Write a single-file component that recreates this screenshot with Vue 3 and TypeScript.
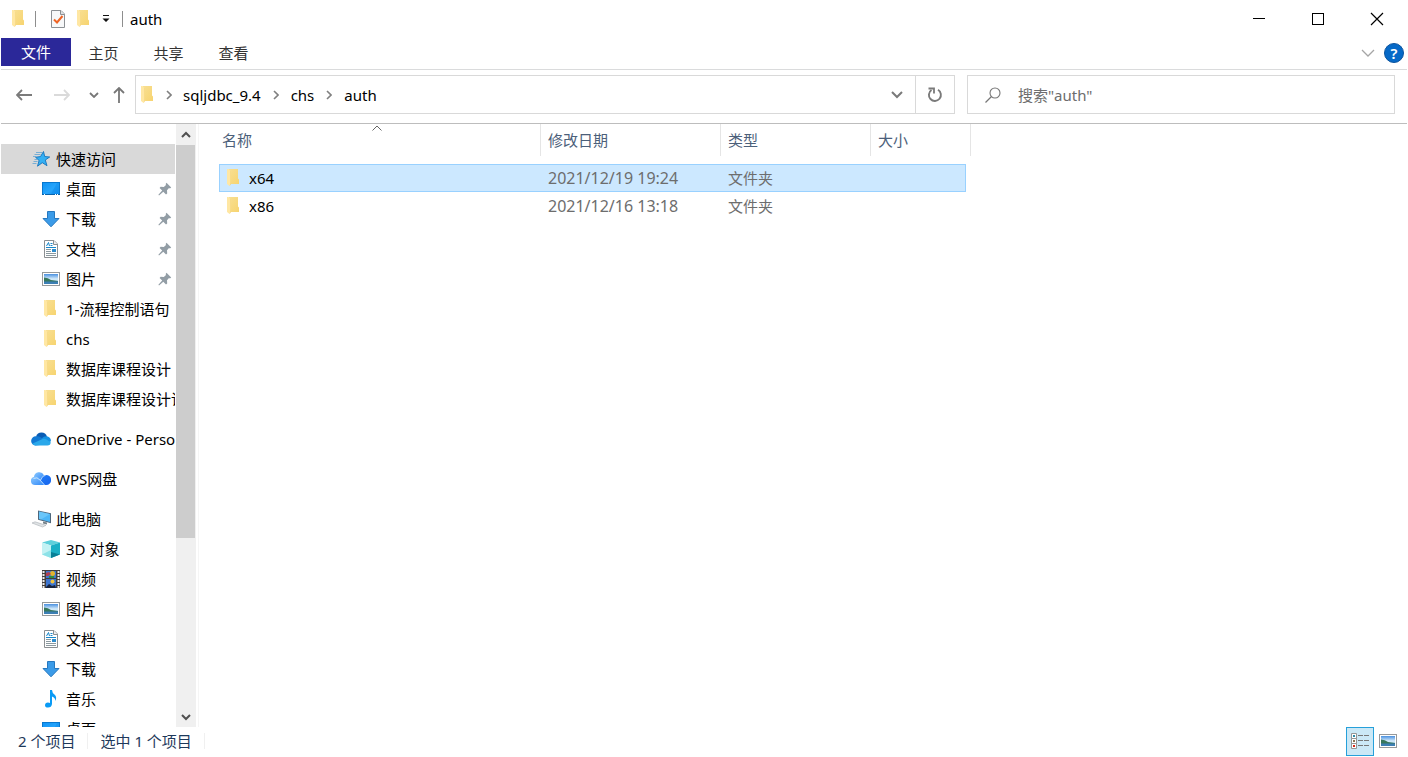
<script setup lang="ts">
import { ref } from 'vue'

interface NavItem {
  label: string
  icon: string
  root?: boolean
  pinned?: boolean
  gap?: boolean
}

interface Entry {
  name: string
  modified: string
  kind: string
}

const tabs: string[] = ['主页', '共享', '查看']
const crumbs: string[] = ['sqljdbc_9.4', 'chs', 'auth']

const navItems: NavItem[] = [
  { label: '快速访问', icon: 'star', root: true },
  { label: '桌面', icon: 'desktop', pinned: true },
  { label: '下载', icon: 'download', pinned: true },
  { label: '文档', icon: 'document', pinned: true },
  { label: '图片', icon: 'picture', pinned: true },
  { label: '1-流程控制语句', icon: 'folder' },
  { label: 'chs', icon: 'folder' },
  { label: '数据库课程设计', icon: 'folder' },
  { label: '数据库课程设计论文', icon: 'folder' },
  { label: 'OneDrive - Personal', icon: 'onedrive', root: true, gap: true },
  { label: 'WPS网盘', icon: 'wps', root: true, gap: true },
  { label: '此电脑', icon: 'computer', root: true, gap: true },
  { label: '3D 对象', icon: 'cube' },
  { label: '视频', icon: 'video' },
  { label: '图片', icon: 'picture' },
  { label: '文档', icon: 'document' },
  { label: '下载', icon: 'download' },
  { label: '音乐', icon: 'music' },
  { label: '桌面', icon: 'desktop' },
]

const entries: Entry[] = [
  { name: 'x64', modified: '2021/12/19 19:24', kind: '文件夹' },
  { name: 'x86', modified: '2021/12/16 13:18', kind: '文件夹' },
]

const currentNav = ref(0)
const selected = ref('x64')
const query = ref('')
</script>

<template>
  <div class="window">
    <svg class="sprite" aria-hidden="true">
      <defs>
        <linearGradient id="g-folder" x1="0" x2="1" y1="0" y2="1">
          <stop offset="0" stop-color="#f8df92" />
          <stop offset="1" stop-color="#f7d470" />
        </linearGradient>
        <linearGradient id="g-screen" x1="0" x2="1" y1="0" y2="1">
          <stop offset="0" stop-color="#0f93f5" />
          <stop offset="0.55" stop-color="#27a5fb" />
          <stop offset="1" stop-color="#0c8cf0" />
        </linearGradient>
        <linearGradient id="g-wps" x1="0" x2="1" y1="0" y2="1">
          <stop offset="0" stop-color="#1f7cf6" />
          <stop offset="1" stop-color="#1764ee" />
        </linearGradient>
        <linearGradient id="g-wps-light" x1="0" x2="1" y1="0" y2="1">
          <stop offset="0" stop-color="#8ccaff" />
          <stop offset="1" stop-color="#2f86f8" />
        </linearGradient>
        <linearGradient id="g-sky" x1="0" x2="0" y1="0" y2="1">
          <stop offset="0" stop-color="#4a90e0" />
          <stop offset="0.5" stop-color="#d5ecfb" />
          <stop offset="1" stop-color="#8fc0e6" />
        </linearGradient>
      </defs>
      <symbol id="i-folder" viewBox="0 0 20 20">
        <path d="M5 1h9v9.500l1 1V16H5z" fill="url(#g-folder)" />
        <path d="M6.500 3v13M6.500 16l-.8 1.500" fill="none" stroke="#efca68" stroke-width="0.800" />
        <path d="M3 1h1.500L6.500 3v12.500L5.500 18 3 16z" fill="#ffe7a3" />
      </symbol>
      <symbol id="i-star" viewBox="0 0 20 20">
        <path d="M12.500 2.500l1.200 5 5 .5-4.400 3 1.700 5.700-4.700-3-4.800 3.500 1.600-5.700L4.500 8.200l5-.6z" fill="#35b0f3" stroke="#1573bb" stroke-width="0.900" stroke-linejoin="round" />
        <path d="M5 3.500h6M3.500 5.500h6M2 7.500h3M3.500 10.500h3M2.500 12.500h4M1.500 14.500h4" stroke="#5fa5d4" stroke-width="0.800" fill="none" />
      </symbol>
      <symbol id="i-desktop" viewBox="0 0 20 20">
        <rect x="1.500" y="3.500" width="17" height="12" fill="url(#g-screen)" stroke="#0878cf" />
        <path d="M10 15L16 4h2v11z" fill="#0d8cec" opacity="0.500" />
        <path d="M1 15.500h18" stroke="#0864ad" />
        <path d="M3 15.500h1M14 15.500h1M16 15.500h1" stroke="#fff" />
      </symbol>
      <symbol id="i-download" viewBox="0 0 20 20">
        <path d="M6.500 2.500h7v7h4.500L10 17.800 2 9.500h4.500z" fill="#3b9be8" stroke="#2678bf" />
      </symbol>
      <symbol id="i-document" viewBox="0 0 20 20">
        <path d="M3.500 1.500h9.500l3.500 3.500v13.500h-13z" fill="#fff" stroke="#8b8f92" />
        <path d="M12.500 1.500V5.500H16.500" fill="#eee" stroke="#8b8f92" />
        <path d="M5.500 7L7.500 3.500 8.500 7M9.500 4.500h2M9.500 6.500h2M5 8.500h10" fill="none" stroke="#1787cb" />
        <path d="M5 10.500h5M5 12.500h5M5 14.500h10M5 16.500h10" stroke="#8b999f" />
        <path d="M11 10h4v3h-4z" fill="#2d8ccc" />
      </symbol>
      <symbol id="i-picture" viewBox="0 0 20 20">
        <rect x="1.500" y="3.500" width="17" height="13" fill="#fff" stroke="#96999b" />
        <rect x="3" y="5" width="14" height="10" fill="url(#g-sky)" />
        <path d="M3 8.500q4 .2 7 2.500l7 1v1H3z" fill="#37775c" />
        <path d="M3 12.500h14V15H3z" fill="#3c7fb4" />
      </symbol>
      <symbol id="i-onedrive" viewBox="0 0 20 20">
        <path d="M5 7.500A5.800 5.800 0 0 1 16 7.500L12 11z" fill="#0a5cb4" />
        <path d="M4.500 16.500A4.600 4.600 0 0 1 5 7.300q2.500-.5 5 1.200l4 2.500-5 5z" fill="#1279d4" />
        <path d="M10.500 9.500Q13 7 16 7.300q4 1 4 5l-2 1z" fill="#1490e2" />
        <path d="M1.200 14.800L11.500 10q1.800-.8 3.500.3l4.700 2.900a3.400 3.400 0 0 1-3.300 3.300h-12q-2 0-3.200-1.700z" fill="#2aa8ea" />
      </symbol>
      <symbol id="i-wps" viewBox="0 0 20 20">
        <path d="M3 8A5.300 5.300 0 0 1 13 6.200l-2.500 5z" fill="url(#g-wps-light)" />
        <path d="M10 10.500q1.500-4.500 5-4.500a4.900 4.900 0 0 1 .3 10H9z" fill="url(#g-wps)" />
        <path d="M4 16a4.200 4.200 0 0 1-.8-8.300q3.300-.6 5.300 2l5.500 6.300z" fill="url(#g-wps-light)" />
        <path d="M2.500 9.500q3.500-2 6.500 1.500l4.500 5M9.700 11q1.500-4.500 5-4.800" fill="none" stroke="#e4f2ff" stroke-width="0.700" />
      </symbol>
      <symbol id="i-computer" viewBox="0 0 20 20">
        <path d="M7 1.500l13 2.700v10L7 10.800z" fill="#4e667b" />
        <path d="M8 2.600L19 5v8L8 10z" fill="#4db6f6" />
        <path d="M8 2.600L19 5 10 10.500 8 10z" fill="#7fd0fb" opacity="0.600" />
        <path d="M12 12.500l4 1v2l-4-1z" fill="#78838b" />
        <path d="M1 14l3-1.200 11 3.500-3.500 1.700z" fill="#e0e3e5" stroke="#a9b0b5" stroke-width="0.600" />
      </symbol>
      <symbol id="i-cube" viewBox="0 0 20 20">
        <path d="M10 1l9 2.500-9 3-9-3z" fill="#5fd0db" />
        <path d="M1 3.500l9 3V19l-9-3.500z" fill="#c3f2f4" />
        <path d="M1 15.500L10 11V19z" fill="#8de2e8" />
        <path d="M10 6.500l9-3v12L10 19z" fill="#1aafc5" />
        <path d="M10 13l9 2.500L10 19z" fill="#087f96" />
      </symbol>
      <symbol id="i-video" viewBox="0 0 20 20">
        <rect x="1" y="1" width="18" height="18" fill="#423e3d" />
        <path d="M2.500 2v17M17.500 2v17" stroke="#eee" stroke-width="2" stroke-dasharray="2 1" />
        <path d="M5 2h10v7H5zM5 10h10v9H5z" fill="#3d75cf" />
        <circle cx="11.500" cy="4.500" r="2.500" fill="#e3b42d" />
        <path d="M5 4l3-1 2 2-3 2H5z" fill="#b43f4e" />
        <path d="M8 7h5v2H8z" fill="#2d8d44" />
        <circle cx="11.500" cy="12.500" r="2" fill="#f1c23c" />
        <path d="M5 18l3-3 3 2 3-1 1 3H5z" fill="#16233e" />
      </symbol>
      <symbol id="i-music" viewBox="0 0 20 20">
        <path d="M9 1h2q0 3 3 5 2 2 .5 6-.2-3.500-3.500-4.500V15q-.5 3.500-4 3.500-3 0-3-2.300 0-2.400 3-2.700 1.300 0 2 .4z" fill="#0a9bf5" />
      </symbol>
      <symbol id="i-pin" viewBox="0 0 14 14">
        <path d="M8.500.8l4.700 4.700-1.300.9-.9-.3-2 2.200.2 3.200-1.200.9-2.700-2.700L1 13.400l-.6-.6L4.200 8.600 1.600 5.900l1-1.100 3.200.2L8 2.900l-.3-1z" fill="#929da5" />
      </symbol>
    </svg>

    <header class="titlebar">
      <svg class="ic20 title-folder"><use href="#i-folder" /></svg>
      <span class="rule"></span>
      <button class="quick" type="button" aria-label="属性">
        <svg width="16" height="20" viewBox="0 0 16 20">
          <path d="M1.500 1.500h9.500l3.500 3.500v13.500h-13z" fill="#f7f8f9" stroke="#8c9094" />
          <path d="M10.500 1.500v4h4" fill="#dcdfe2" stroke="#8c9094" />
          <path d="M4 10.500l3 3 5.500-6.500" fill="none" stroke="#ee6425" stroke-width="2" />
        </svg>
      </button>
      <button class="quick" type="button" aria-label="新建文件夹">
        <svg class="ic20"><use href="#i-folder" /></svg>
      </button>
      <button class="quick customize" type="button" aria-label="自定义快速访问工具栏">
        <svg width="8" height="8" viewBox="0 0 8 8"><path d="M1 0h6v1H1zM0.500 3.500h7L4 7z" fill="#111" /></svg>
      </button>
      <span class="rule"></span>
      <h1 class="title">auth</h1>
      <div class="caption">
        <button type="button" aria-label="最小化">
          <svg width="14" height="14" viewBox="0 0 14 14"><path d="M1 6.500h12" stroke="#000" /></svg>
        </button>
        <button type="button" aria-label="最大化">
          <svg width="14" height="14" viewBox="0 0 14 14"><rect x="1.500" y="1.500" width="11" height="11" fill="none" stroke="#000" /></svg>
        </button>
        <button type="button" aria-label="关闭">
          <svg width="14" height="14" viewBox="0 0 14 14"><path d="M1 1l12 12M13 1L1 13" stroke="#000" stroke-width="1.200" /></svg>
        </button>
      </div>
    </header>

    <div class="ribbon">
      <button class="tab file" type="button">文件</button>
      <button v-for="tab in tabs" :key="tab" class="tab" type="button">{{ tab }}</button>
      <div class="ribbon-end">
        <button class="expand" type="button" aria-label="展开功能区">
          <svg width="14" height="8" viewBox="0 0 14 8"><path d="M1 1l6 6 6-6" fill="none" stroke="#a5a5a5" stroke-width="1.300" /></svg>
        </button>
        <button class="help" type="button" aria-label="帮助">?</button>
      </div>
    </div>

    <div class="toolbar">
      <div class="history">
        <button type="button" aria-label="后退">
          <svg width="16" height="12" viewBox="0 0 16 12"><path d="M6 1L1 6l5 5M1 6h15" fill="none" stroke="#7b7b7b" stroke-width="1.800" /></svg>
        </button>
        <button type="button" aria-label="前进">
          <svg width="16" height="12" viewBox="0 0 16 12"><path d="M10 1l5 5-5 5M15 6H0" fill="none" stroke="#dadada" stroke-width="1.800" /></svg>
        </button>
        <button class="slim" type="button" aria-label="最近浏览的位置">
          <svg width="10" height="6" viewBox="0 0 10 6"><path d="M1 1l4 4 4-4" fill="none" stroke="#777" stroke-width="1.800" /></svg>
        </button>
        <button class="slim" type="button" aria-label="上移">
          <svg width="12" height="16" viewBox="0 0 12 16"><path d="M1 6l5-5 5 5M6 1v15" fill="none" stroke="#777" stroke-width="1.800" /></svg>
        </button>
      </div>
      <div class="address">
        <svg class="ic20"><use href="#i-folder" /></svg>
        <template v-for="crumb in crumbs" :key="crumb">
          <svg class="sep" viewBox="0 0 6 10"><path d="M1 1l4 4-4 4" fill="none" stroke="#808080" stroke-width="1.600" /></svg>
          <a href="#" class="crumb">{{ crumb }}</a>
        </template>
        <button class="drop" type="button" aria-label="以前的位置">
          <svg width="12" height="8" viewBox="0 0 12 8"><path d="M1 1l5 5 5-5" fill="none" stroke="#7a7a7a" stroke-width="2" /></svg>
        </button>
        <button class="refresh" type="button" aria-label="刷新">
          <svg width="16" height="16" viewBox="0 0 16 16">
            <path d="M11 2.800A6 6 0 1 1 4.500 3" fill="none" stroke="#7a7a7a" stroke-width="1.900" />
            <path d="M1.500 1.500h5.500v5" fill="none" stroke="#7a7a7a" stroke-width="1.800" />
          </svg>
        </button>
      </div>
      <label class="search">
        <svg width="16" height="16" viewBox="0 0 16 16">
          <circle cx="10" cy="6" r="5" fill="none" stroke="#777" stroke-width="1.100" />
          <path d="M6.500 9.500L.5 15.500" stroke="#777" stroke-width="1.200" />
        </svg>
        <input v-model="query" type="text" placeholder="搜索&quot;auth&quot;" aria-label="搜索" />
      </label>
    </div>

    <div class="body">
      <nav class="tree" aria-label="导航窗格">
        <a
          v-for="(item, i) in navItems"
          :key="i"
          href="#"
          class="node"
          :class="{ root: item.root, gap: item.gap, current: i === currentNav }"
          @click.prevent="currentNav = i"
        >
          <svg class="ic20"><use :href="`#i-${item.icon}`" /></svg>
          <span class="label">{{ item.label }}</span>
          <svg v-if="item.pinned" class="pin"><use href="#i-pin" /></svg>
        </a>
      </nav>
      <div class="scrollbar">
        <button type="button" aria-label="向上滚动">
          <svg width="10" height="8" viewBox="0 0 10 8"><path d="M1 6l4-4 4 4" fill="none" stroke="#505050" stroke-width="2" /></svg>
        </button>
        <div class="track"><div class="thumb"></div></div>
        <button type="button" aria-label="向下滚动">
          <svg width="10" height="8" viewBox="0 0 10 8"><path d="M1 2l4 4 4-4" fill="none" stroke="#505050" stroke-width="2" /></svg>
        </button>
      </div>

      <main class="content">
        <table>
          <colgroup>
            <col class="c-name" />
            <col class="c-date" />
            <col class="c-kind" />
            <col class="c-size" />
            <col class="c-edge" />
          </colgroup>
          <thead>
            <tr>
              <th class="sorted" scope="col" aria-sort="ascending">
                名称
                <svg class="caret" width="10" height="6" viewBox="0 0 10 6"><path d="M.5 5.500L5 1l4.500 4.500" fill="none" stroke="#666" /></svg>
              </th>
              <th scope="col">修改日期</th>
              <th scope="col">类型</th>
              <th scope="col" colspan="2">大小</th>
            </tr>
          </thead>
          <tbody>
            <tr
              v-for="entry in entries"
              :key="entry.name"
              :class="{ selected: entry.name === selected }"
              @click="selected = entry.name"
            >
              <td>
                <span class="name"><svg class="ic20"><use href="#i-folder" /></svg>{{ entry.name }}</span>
              </td>
              <td class="date">{{ entry.modified }}</td>
              <td>{{ entry.kind }}</td>
              <td></td>
              <td class="edge"></td>
            </tr>
          </tbody>
        </table>
      </main>
    </div>

    <footer class="status">
      <span class="count">2 个项目</span>
      <span class="count">选中 1 个项目</span>
      <div class="views">
        <button class="view active" type="button" aria-label="详细信息">
          <svg width="20" height="20" viewBox="0 0 20 20">
            <path d="M1.500 2.500h5v5h-5zM1.500 7.500h5v5h-5zM1.500 12.500h5v5h-5z" fill="#fff" stroke="#969696" />
            <path d="M3 4h2v2H3z" fill="#2d8aa8" />
            <path d="M3 9h2v2H3z" fill="#8a7353" />
            <path d="M3 14h2v2H3z" fill="#d52818" />
            <path d="M8 4.500h5M14 4.500h5M8 9.500h5M14 9.500h5M8 14.500h5M14 14.500h5" stroke="#777" />
          </svg>
        </button>
        <button class="view" type="button" aria-label="大图标">
          <svg class="ic20"><use href="#i-picture" /></svg>
        </button>
      </div>
    </footer>
  </div>
</template>

<style>
body {
  margin: 0;
  background: #fff;
}
</style>

<style scoped>
.window {
  box-sizing: border-box;
  display: flex;
  flex-direction: column;
  height: 100vh;
  padding: 0 1px;
  background: #fff;
  color: #000;
  font-family: "Noto Sans", "Noto Sans CJK SC", sans-serif;
  font-size: 15px;
  line-height: 20px;
  overflow: hidden;
}

.sprite {
  position: absolute;
  width: 0;
  height: 0;
}

svg {
  display: block;
  flex: none;
}

.ic20 {
  width: 20px;
  height: 20px;
}

button {
  display: flex;
  align-items: center;
  justify-content: center;
  box-sizing: border-box;
  margin: 0;
  padding: 0;
  border: 0;
  background: none;
  color: inherit;
  font: inherit;
}

a {
  color: inherit;
  text-decoration: none;
}

.titlebar {
  display: flex;
  align-items: center;
  flex: none;
  height: 38px;
  padding-left: 8px;
}

.rule {
  width: 1px;
  height: 16px;
  background: #8e8e8e;
}

.title-folder {
  margin-right: 6px;
}

.quick {
  width: 16px;
  margin-left: 14px;
}

.quick + .quick {
  width: 20px;
  margin-left: 8px;
}

.quick + .customize {
  width: 24px;
  margin-left: 0;
  margin-right: 4px;
}

.title {
  margin: 0 0 0 7px;
  font-size: 15px;
  font-weight: 400;
}

.caption {
  display: flex;
  margin-left: auto;
  margin-right: 1px;
}

.caption button {
  width: 59px;
  height: 38px;
}

.ribbon {
  display: flex;
  flex: none;
  height: 31px;
  border-bottom: 1px solid #dadbdc;
}

.tab {
  width: 65px;
  height: 30px;
  color: #333;
}

.tab.file {
  width: 70px;
  height: 28px;
  background: #2b2899;
  color: #fff;
}

.ribbon-end {
  display: flex;
  align-items: center;
  gap: 9px;
  height: 30px;
  margin-left: auto;
  padding-right: 3px;
}

.help {
  width: 20px;
  height: 20px;
  border: 1px solid #0c549e;
  border-radius: 50%;
  background: #0669c7;
  color: #fff;
  font-size: 15px;
  font-weight: 600;
}

.toolbar {
  display: flex;
  align-items: flex-start;
  flex: none;
  height: 48px;
  padding: 5px 12px 0 0;
  border-bottom: 1px solid #bdbdbd;
}

.history {
  display: flex;
  width: 134px;
  padding-left: 4px;
  box-sizing: border-box;
}

.history button {
  width: 38px;
  height: 39px;
}

.history .slim {
  width: 25px;
}

.address {
  display: flex;
  align-items: center;
  flex: 1;
  min-width: 0;
  height: 37px;
  margin-right: 12px;
  padding-left: 2px;
  border: 1px solid #d9d9d9;
}

.sep {
  width: 6px;
  height: 10px;
  margin: 0 12px 0 11px;
}

.address .ic20 + .sep {
  margin: 0 11px 0 8px;
}

.crumb + .sep {
  margin-left: 12px;
}

.drop {
  width: 36px;
  height: 37px;
  margin-left: auto;
}

.refresh {
  width: 39px;
  height: 37px;
  border-left: 1px solid #d9d9d9;
}

.search {
  display: flex;
  align-items: center;
  gap: 17px;
  box-sizing: border-box;
  width: 428px;
  height: 39px;
  padding-left: 17px;
  border: 1px solid #d9d9d9;
}

.search input {
  flex: 1;
  min-width: 0;
  padding: 0;
  border: 0;
  outline: 0;
  background: none;
  color: #000;
  font: inherit;
}

.search input::placeholder {
  color: #6d6d6d;
  opacity: 1;
}

.body {
  display: flex;
  flex: 1;
  min-height: 0;
}

.tree {
  flex: none;
  box-sizing: border-box;
  width: 175px;
  padding-top: 20px;
  overflow: hidden;
}

.node {
  display: flex;
  align-items: center;
  height: 30px;
  width: 174px;
  padding-left: 40px;
  box-sizing: border-box;
  overflow: hidden;
  white-space: nowrap;
}

.node.root {
  padding-left: 30px;
}

.node.gap {
  margin-top: 10px;
}

.node.current {
  background: #d9d9d9;
}

.label {
  margin-left: 5px;
}

.pin {
  width: 14px;
  height: 14px;
  margin-left: auto;
  margin-right: 3px;
}

.scrollbar {
  display: flex;
  flex-direction: column;
  flex: none;
  width: 20px;
  margin-right: 2px;
  background: #f0f0f0;
}

.scrollbar button {
  height: 21px;
  width: 19px;
}

.track {
  flex: 1;
}

.thumb {
  width: 19px;
  height: 70%;
  background: #cdcdcd;
}

.content {
  flex: 1;
  min-width: 0;
  padding-left: 20px;
  border-left: 1px solid #f5f5f5;
}

table {
  width: 752px;
  table-layout: fixed;
  border-collapse: separate;
  border-spacing: 0;
}

.c-name {
  width: 322px;
}

.c-date {
  width: 180px;
}

.c-kind {
  width: 150px;
}

.c-size {
  width: 95px;
}

.c-edge {
  width: 5px;
}

th {
  position: relative;
  box-sizing: border-box;
  height: 32px;
  padding: 0 7px;
  border-right: 1px solid #e5e5e5;
  color: #4c607a;
  font-weight: 400;
  text-align: left;
}

.sorted {
  padding-left: 3px;
}

.caret {
  position: absolute;
  top: 1px;
  left: 153px;
}

tbody::before {
  content: "";
  display: block;
  height: 8px;
}

td {
  box-sizing: border-box;
  height: 28px;
  padding: 0 7px;
  border: 0 solid transparent;
  border-width: 1px 0;
  color: #6d6d6d;
}

td:first-child {
  padding-left: 4px;
  border-left-width: 1px;
  color: #000;
}

td:nth-child(4) {
  border-right-width: 1px;
}

td.edge {
  padding: 0;
}

td.date {
  font-size: 16px;
}

.selected td:not(.edge) {
  border-color: #99d1ff;
  background: #cce8ff;
}

.name {
  display: flex;
  align-items: center;
  gap: 5px;
}

.status {
  display: flex;
  align-items: center;
  flex: none;
  box-sizing: border-box;
  height: 30px;
  padding: 0 5px 2px;
  color: #1e395b;
}

.count {
  padding: 0 12px;
  border-right: 1px solid #f0f0f0;
  line-height: 16px;
}

.views {
  display: flex;
  margin-left: auto;
}

.view {
  width: 28px;
  height: 29px;
  border: 1px solid transparent;
}

.view.active {
  border-color: #26a0da;
  background: #cbe8f6;
}
</style>
